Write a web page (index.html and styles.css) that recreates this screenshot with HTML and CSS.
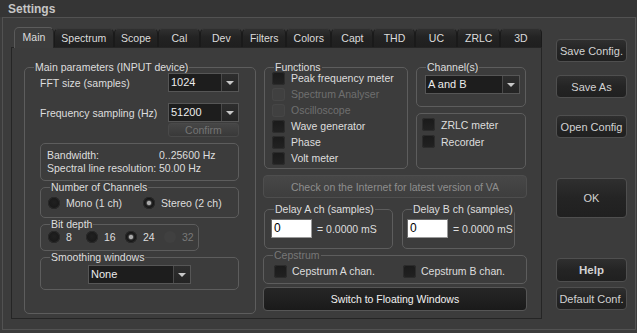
FILE: index.html
```html
<!DOCTYPE html>
<html>
<head>
<meta charset="utf-8">
<link rel="stylesheet" href="styles.css">
</head>
<body>
<div class="title">Settings</div>
<div class="frame">
  <div class="tabwidget">
    <div class="tabs">
      <div class="tab active">Main</div>
      <div class="tab">Spectrum</div>
      <div class="tab">Scope</div>
      <div class="tab">Cal</div>
      <div class="tab">Dev</div>
      <div class="tab">Filters</div>
      <div class="tab">Colors</div>
      <div class="tab">Capt</div>
      <div class="tab">THD</div>
      <div class="tab">UC</div>
      <div class="tab">ZRLC</div>
      <div class="tab">3D</div>
    </div>
    <div class="pane">
      <fieldset class="grp main">
        <legend>Main parameters (INPUT device)</legend>
        <div class="main-body">
          <div class="row">
            <span>FFT size (samples)</span>
            <div class="select sel-small"><span class="val">1024</span><span class="arrow"></span></div>
          </div>
          <div class="row row-gap">
            <span>Frequency sampling (Hz)</span>
            <div class="select sel-small"><span class="val">51200</span><span class="arrow"></span></div>
          </div>
          <div class="confirm">Confirm</div>
          <div class="info">
            <span>Bandwidth:</span><span>0..25600 Hz</span>
            <span>Spectral line resolution:</span><span>50.00 Hz</span>
          </div>
          <fieldset class="grp channels">
            <legend>Number of Channels</legend>
            <div class="radios two">
              <label class="ritem"><span class="radio"></span>Mono (1 ch)</label>
              <label class="ritem"><span class="radio on"></span>Stereo (2 ch)</label>
            </div>
          </fieldset>
          <fieldset class="grp bits">
            <legend>Bit depth</legend>
            <div class="radios four">
              <label class="ritem"><span class="radio"></span>8</label>
              <label class="ritem"><span class="radio"></span>16</label>
              <label class="ritem"><span class="radio on"></span>24</label>
              <label class="ritem dis"><span class="radio"></span>32</label>
            </div>
          </fieldset>
          <fieldset class="grp smooth">
            <legend>Smoothing windows</legend>
            <div class="select sel-smooth"><span class="val">None</span><span class="arrow"></span></div>
          </fieldset>
        </div>
      </fieldset>

      <div class="right">
        <div class="row1">
          <fieldset class="grp functions">
            <legend>Functions</legend>
            <div class="checks">
              <label class="citem"><span class="cbox"></span>Peak frequency meter</label>
              <label class="citem dis"><span class="cbox"></span>Spectrum Analyser</label>
              <label class="citem dis"><span class="cbox"></span>Oscilloscope</label>
              <label class="citem"><span class="cbox"></span>Wave generator</label>
              <label class="citem"><span class="cbox"></span>Phase</label>
              <label class="citem"><span class="cbox"></span>Volt meter</label>
            </div>
          </fieldset>
          <div class="col2">
            <fieldset class="grp chan">
              <legend>Channel(s)</legend>
              <div class="select sel-chan"><span class="val">A and B</span><span class="arrow"></span></div>
            </fieldset>
            <div class="box zrlc">
              <label class="citem tall"><span class="cbox"></span>ZRLC meter</label>
              <label class="citem tall"><span class="cbox"></span>Recorder</label>
            </div>
          </div>
        </div>
        <div class="wide-btn check">Check on the Internet for latest version of VA</div>
        <div class="delays">
          <fieldset class="grp delay delay-a">
            <legend>Delay A ch (samples)</legend>
            <div class="drow"><span class="input">0</span><span>= 0.0000 mS</span></div>
          </fieldset>
          <fieldset class="grp delay delay-b">
            <legend>Delay B ch (samples)</legend>
            <div class="drow"><span class="input">0</span><span>= 0.0000 mS</span></div>
          </fieldset>
        </div>
        <fieldset class="grp cep">
          <legend class="dis-text">Cepstrum</legend>
          <div class="cep-row">
            <label class="citem"><span class="cbox"></span>Cepstrum A chan.</label>
            <label class="citem"><span class="cbox"></span>Cepstrum B chan.</label>
          </div>
        </fieldset>
        <div class="wide-btn switch">Switch to Floating Windows</div>
      </div>
    </div>
  </div>

  <div class="side">
    <div class="btn">Save Config.</div>
    <div class="btn save-as">Save As</div>
    <div class="btn open">Open Config</div>
    <div class="btn ok">OK</div>
    <div class="btn help">Help</div>
    <div class="btn deflt">Default Conf.</div>
  </div>
</div>
</body>
</html>
```

FILE: styles.css
```css
* { box-sizing: border-box; }

body {
  margin: 0;
  width: 637px;
  height: 333px;
  overflow: hidden;
  background: #3c3c3c;
  font-family: "Liberation Sans", Arial, sans-serif;
  font-size: 10.5px;
  color: #dedede;
}

.title {
  height: 17px;
  line-height: 18px;
  padding-left: 8px;
  font-size: 12px;
  font-weight: bold;
  color: #c6c6c6;
  background: #353535;
}

.frame {
  margin-left: 2px;
  width: 634px;
  height: 313px;
  border: 1px solid #525252;
  display: flex;
  align-items: flex-start;
}

.tabwidget {
  margin: 9px 0 0 8px;
  width: 531px;
}

.tabs {
  display: flex;
  align-items: flex-end;
  height: 20px;
  padding-left: 3px;
}

.tab {
  height: 19px;
  min-width: 42px;
  padding: 0 7px;
  display: flex;
  align-items: center;
  justify-content: center;
  background: linear-gradient(#303030, #232323 45%, #1f1f1f);
  border: 1px solid #1a1a1a;
  border-bottom: none;
  border-top-color: #3a3a3a;
  border-radius: 5px 5px 0 0;
  color: #dcdcdc;
}

.tab.active {
  min-width: 40px;
  height: 21px;
  margin-bottom: -1px;
  padding-bottom: 2px;
  background: #3d3d3d;
  border-color: #5c5c5c #262626 #3d3d3d #5a5a5a;
  position: relative;
  z-index: 1;
}

.pane {
  height: 272px;
  border: 1px solid #252525;
  background: #3c3c3c;
  display: flex;
  gap: 7px;
  padding: 13px 0 0 12px;
}

fieldset.grp {
  margin: 0;
  padding: 0;
  min-width: 0;
  border: 1px solid #5d5d5d;
  border-radius: 5px;
}

fieldset.grp legend {
  margin-left: 9px;
  padding: 0 1px;
  line-height: 12px;
}

.dis-text { color: #777; }

/* Main parameters */
.main { width: 232px; height: 253px; }

.main-body { padding: 0 16px 0 15px; }

.row {
  display: flex;
  align-items: center;
  justify-content: space-between;
  height: 19px;
}

.row-gap { margin-top: 11px; }

.select {
  display: flex;
  height: 19px;
  border: 1px solid #565656;
  background: #1d1d1d;
  color: #ececec;
}

.select .val {
  flex: 1;
  padding-left: 2px;
  line-height: 17px;
  font-size: 11px;
}

.select .arrow {
  width: 17px;
  border-left: 1px solid #4a4a4a;
  background: linear-gradient(#2e2e2e, #242424);
  display: flex;
  align-items: center;
  justify-content: center;
}

.select .arrow::after {
  content: "";
  border-left: 4px solid transparent;
  border-right: 4px solid transparent;
  border-top: 4px solid #c8c8c8;
}

.sel-small { width: 71px; }

.confirm {
  margin: 1px 0 0 auto;
  width: 71px;
  height: 14px;
  line-height: 12px;
  text-align: center;
  border: 1px solid #494949;
  border-radius: 3px;
  background: linear-gradient(#464646, #393939);
  color: #747474;
}

.info {
  margin-top: 6px;
  height: 38px;
  border: 1px solid #5d5d5d;
  border-radius: 5px;
  padding: 5px 0 0 6px;
  line-height: 13px;
  display: grid;
  grid-template-columns: 112px auto;
  align-content: start;
}

.channels { margin-top: 5px; height: 37px; }
.bits { margin-top: 3px; width: 159px; height: 33px; }
.smooth { margin-top: 9px; height: 39px; }

.radios {
  display: grid;
  padding-left: 7px;
}

.radios.two { grid-template-columns: 95px auto; height: 20px; }
.radios.four { grid-template-columns: 38px 39px 39px auto; height: 14px; }

.ritem {
  display: flex;
  align-items: center;
  gap: 6px;
}

.radio {
  width: 12px;
  height: 12px;
  border-radius: 50%;
  background: radial-gradient(circle at 50% 45%, #202020, #151515);
  box-shadow: 0 0 0 1px #2a2a2a inset;
}

.radio.on {
  background: radial-gradient(circle, #a8a8a8 0 1.8px, #4a4a4a 2.4px, #222 3.2px, #161616 4.5px);
}

.ritem.dis { color: #787878; }
.ritem.dis .radio { background: #404040; box-shadow: none; }

.sel-smooth { width: 103px; margin: 2px auto 0; }

/* Right area */
.right {
  width: 264px;
  display: flex;
  flex-direction: column;
}

.row1 {
  display: flex;
  gap: 8px;
  margin: 0 1px;
}

.functions { width: 144px; height: 108px; }

.checks {
  margin-top: -3px;
  padding-left: 7px;
}

.citem {
  display: flex;
  align-items: center;
  gap: 6px;
  height: 16px;
}

.citem.tall { height: 17px; }

.cbox {
  width: 13px;
  height: 13px;
  border-radius: 3px;
  background: linear-gradient(#1a1a1a, #222);
  box-shadow: 0 0 0 1px #2c2c2c inset;
}

.citem.dis { color: #6f6f6f; }
.citem.dis .cbox { background: #404040; box-shadow: 0 0 0 1px #464646 inset; }

.col2 { width: 110px; display: flex; flex-direction: column; }

.chan { height: 46px; }

.sel-chan { width: 95px; margin: 2px 0 0 8px; }

.box {
  border: 1px solid #5d5d5d;
  border-radius: 5px;
}

.zrlc {
  margin-top: 6px;
  height: 56px;
  padding: 2px 0 0 5px;
}

.wide-btn {
  display: flex;
  align-items: center;
  justify-content: center;
  border-radius: 4px;
}

.check {
  margin-top: 6px;
  height: 23px;
  background: linear-gradient(#474747, #3e3e3e);
  border: 1px solid #4e4e4e;
  color: #8e8e8e;
}

.delays {
  display: flex;
  gap: 9px;
  margin: 5px 0 0 1px;
}

.delay { height: 46px; }
.delay-a { width: 129px; }
.delay-b { width: 113px; }

.drow {
  display: flex;
  align-items: center;
  gap: 5px;
  margin-top: 4px;
  padding-left: 6px;
}

.delay-b .drow { padding-left: 4px; }

.input {
  width: 41px;
  height: 19px;
  background: #fff;
  border: 1px solid #9a9a9a;
  border-top-color: #6a6a6a;
  border-left-color: #6a6a6a;
  color: #000;
  font-size: 12px;
  line-height: 17px;
  padding-left: 2px;
}

.cep {
  margin: 4px 1px 0;
  height: 35px;
}

.cep-row {
  display: grid;
  grid-template-columns: 129px auto;
  padding: 2px 0 0 10px;
}

.cep-row .citem { gap: 5px; }

.switch {
  margin-top: 3px;
  height: 24px;
  background: linear-gradient(#262626, #1a1a1a);
  border: 1px solid #565656;
  color: #f2f2f2;
}

/* Side buttons */
.side {
  margin: 21px 0 0 14px;
  width: 71px;
  display: flex;
  flex-direction: column;
}

.btn {
  height: 23px;
  display: flex;
  align-items: center;
  justify-content: center;
  border: 1px solid #4f4f4f;
  border-radius: 4px;
  background: linear-gradient(#2f2f2f, #242424 50%, #202020);
  color: #d2d2d2;
  font-size: 11px;
}

.save-as { margin-top: 13px; }
.open { margin-top: 17px; }
.ok { margin-top: 40px; height: 40px; }
.help { margin-top: 40px; height: 24px; font-weight: bold; font-size: 11.5px; }
.deflt { margin-top: 5px; }
```
